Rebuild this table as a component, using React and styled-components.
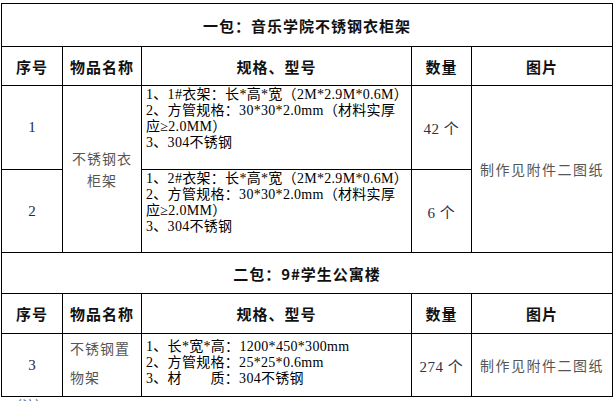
import React from "react";
import styled, { createGlobalStyle } from "styled-components";

const GlobalStyle = createGlobalStyle`
  html, body {
    margin: 0;
    padding: 0;
    background: #fff;
    overflow: hidden;
  }
  body {
    font-family: "Liberation Serif", "Noto Sans CJK SC", serif;
  }
`;

const Page = styled.div`
  padding: 3px 0 0 1px;
`;

// black background + 1px gaps draw the table rules
const Sheet = styled.div`
  display: grid;
  width: max-content;
  grid-template-columns: 60px 78px 269px 59px 140px;
  grid-template-rows: 42px 38px 83px 82px 40px 39px 62px;
  gap: 1px;
  padding: 1px;
  background: #000;
`;

const Cell = styled.div`
  background: #fff;
  display: flex;
  align-items: ${(p) => p.$valign || "center"};
  justify-content: ${(p) => p.$align || "center"};
  box-sizing: border-box;
  grid-row: ${(p) => (p.$rows ? `span ${p.$rows}` : "auto")};
  font-size: 14px;
  color: #222;
`;

const TitleCell = styled(Cell)`
  grid-column: 1 / -1;
  font-family: "Noto Sans CJK SC", sans-serif;
  font-weight: 700;
  font-size: 15px;
  letter-spacing: 1px;
  color: #111;
`;

const HeadCell = styled(Cell)`
  font-family: "Noto Sans CJK SC", sans-serif;
  font-weight: 700;
  font-size: 15px;
  letter-spacing: 1px;
  color: #111;
`;

const NoCell = styled(Cell)`
  font-size: 15px;
  color: #1e2a44;
`;

const NameCell = styled(Cell)`
  padding: ${(p) => p.$pad || "0 6px"};
  font-family: "Noto Sans CJK SC", sans-serif;
  letter-spacing: 1px;
  color: #555;
  line-height: ${(p) => p.$lh || "22px"};
  text-align: ${(p) => p.$text || "center"};
`;

const SpecCell = styled(Cell)`
  flex-direction: column;
  justify-content: flex-start;
  align-items: flex-start;
  padding: ${(p) => p.$pt || "1px"} 0 0 4px;
  color: #000;
`;

const SpecLine = styled.div`
  white-space: nowrap;
  line-height: 16px;
  letter-spacing: 0.3px;
`;

const QtyCell = styled(Cell)`
  font-size: 15px;
  color: #2a3350;
  letter-spacing: 0.5px;
`;

const PicCell = styled(Cell)`
  font-family: "Noto Sans CJK SC", sans-serif;
  letter-spacing: 1.5px;
  color: #555;
`;

const Note = styled.div`
  font-family: "Noto Sans CJK SC", sans-serif;
  font-size: 13px;
  line-height: 16px;
  padding-left: 8px;
  color: #56698a;
`;

const packages = [
  {
    title: "一包：音乐学院不锈钢衣柜架",
    name: "不锈钢衣柜架",
    picture: "制作见附件二图纸",
    items: [
      {
        no: "1",
        qty: "42 个",
        spec: [
          "1、1#衣架：长*高*宽（2M*2.9M*0.6M）",
          "2、方管规格：30*30*2.0mm（材料实厚",
          "应≥2.0MM）",
          "3、304不锈钢",
        ],
      },
      {
        no: "2",
        qty: "6 个",
        spec: [
          "1、2#衣架：长*高*宽（2M*2.9M*0.6M）",
          "2、方管规格：30*30*2.0mm（材料实厚",
          "应≥2.0MM）",
          "3、304不锈钢",
        ],
      },
    ],
  },
  {
    title: "二包：9#学生公寓楼",
    name: "不锈钢置物架",
    picture: "制作见附件二图纸",
    left: true,
    items: [
      {
        no: "3",
        qty: "274 个",
        spec: [
          "1、长*宽*高：1200*450*300mm",
          "2、方管规格：25*25*0.6mm",
          "3、材　　质：304不锈钢",
        ],
      },
    ],
  },
];

const heads = ["序号", "物品名称", "规格、型号", "数量", "图片"];

export default function App() {
  return (
    <Page>
      <GlobalStyle />
      <Sheet>
        {packages.map((pkg) => (
          <React.Fragment key={pkg.title}>
            <TitleCell>{pkg.title}</TitleCell>
            {heads.map((h) => (
              <HeadCell key={h}>{h}</HeadCell>
            ))}
            {pkg.items.map((it, i) => (
              <React.Fragment key={it.no}>
                <NoCell>{it.no}</NoCell>
                {i === 0 &&
                  (pkg.left ? (
                    <NameCell
                      $rows={pkg.items.length}
                      $align="flex-start"
                      $valign="flex-start"
                      $text="left"
                      $lh="29px"
                      $pad="0 4px 0 7px"
                    >
                      {pkg.name}
                    </NameCell>
                  ) : (
                    <NameCell $rows={pkg.items.length}>{pkg.name}</NameCell>
                  ))}
                <SpecCell $pt={pkg.left ? "5px" : "1px"}>
                  {it.spec.map((s) => (
                    <SpecLine key={s}>{s}</SpecLine>
                  ))}
                </SpecCell>
                <QtyCell>{it.qty}</QtyCell>
                {i === 0 && <PicCell $rows={pkg.items.length}>{pkg.picture}</PicCell>}
              </React.Fragment>
            ))}
          </React.Fragment>
        ))}
      </Sheet>
      <Note>（注）</Note>
    </Page>
  );
}
